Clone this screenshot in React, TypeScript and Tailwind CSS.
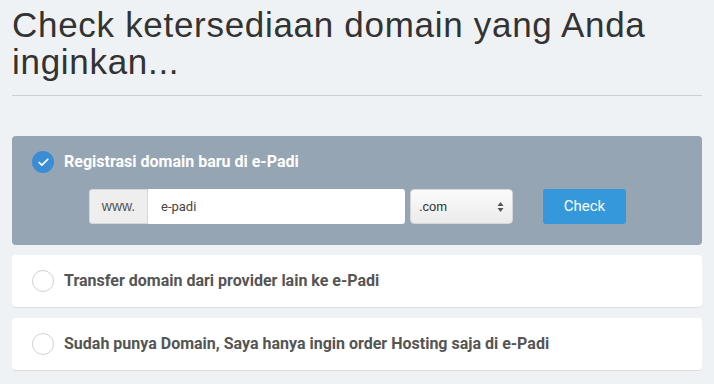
import { Check } from 'lucide-react';

const options = [
  'Transfer domain dari provider lain ke e-Padi',
  'Sudah punya Domain, Saya hanya ingin order Hosting saja di e-Padi',
];

export default function App() {
  return (
    <div className="min-h-[384px] w-[714px] bg-[#eff2f5] px-3 font-['Roboto',sans-serif]">
      {/* Title */}
      <h1 className="pt-[6px] font-['Liberation_Sans',Arial,sans-serif] text-[35px] leading-[37px] text-[#333] tracking-[0.7px]">
        Check ketersediaan domain yang Anda
        <br />
        inginkan...
      </h1>
      <div className="mt-[15px] h-px bg-[#cdd1d6]" />

      {/* Selected option */}
      <div className="mt-[40px] rounded-[4px] bg-[#95a5b4] pb-[21px] pl-[20px] pt-[15px]">
        <div className="flex h-[22px] items-center gap-[10px]">
          <span className="flex h-[22px] w-[22px] items-center justify-center rounded-full bg-[#3a8cd4]">
            <Check className="h-[13px] w-[13px] text-white" strokeWidth={3.2} />
          </span>
          <span className="text-[16px] font-bold text-white">Registrasi domain baru di e-Padi</span>
        </div>

        <div className="ml-[57px] mt-[16px] flex h-[35px] items-stretch">
          <div className="flex w-[59px] items-center justify-center rounded-l-[3px] border border-[#d4d8dc] bg-[#eeeeee] font-['Liberation_Sans',Arial,sans-serif] text-[14px] text-[#555]">
            www.
          </div>
          <div className="flex w-[257px] items-center rounded-r-[3px] bg-white pl-[13px] text-[13px] text-[#444]">
            e-padi
          </div>
          <div className="ml-[5px] flex w-[103px] items-center justify-between rounded-[4px] border border-[#d6d6d6] bg-gradient-to-b from-[#fbfbfb] to-[#ebebeb] pl-[8px] pr-[8px] font-['Liberation_Sans',Arial,sans-serif] text-[13px] text-[#333]">
            .com
            <svg width="7" height="12" viewBox="0 0 7 12">
              <path d="M3.5 1 L6.5 5 H0.5 Z" fill="#555" />
              <path d="M3.5 11 L6.5 7 H0.5 Z" fill="#555" />
            </svg>
          </div>
          <button className="ml-[30px] w-[83px] rounded-[3px] bg-[#3498db] text-[15px] text-white">
            Check
          </button>
        </div>
      </div>

      {/* Other options */}
      {options.map((label) => (
        <div
          key={label}
          className="mt-[10px] flex h-[53px] items-center gap-[10px] rounded-[4px] border-b border-[#d9dee3] bg-white pl-[20px]"
        >
          <span className="h-[22px] w-[22px] rounded-full border border-[#d2d2d2] bg-white" />
          <span className="text-[16px] font-bold text-[#555]">{label}</span>
        </div>
      ))}
    </div>
  );
}
